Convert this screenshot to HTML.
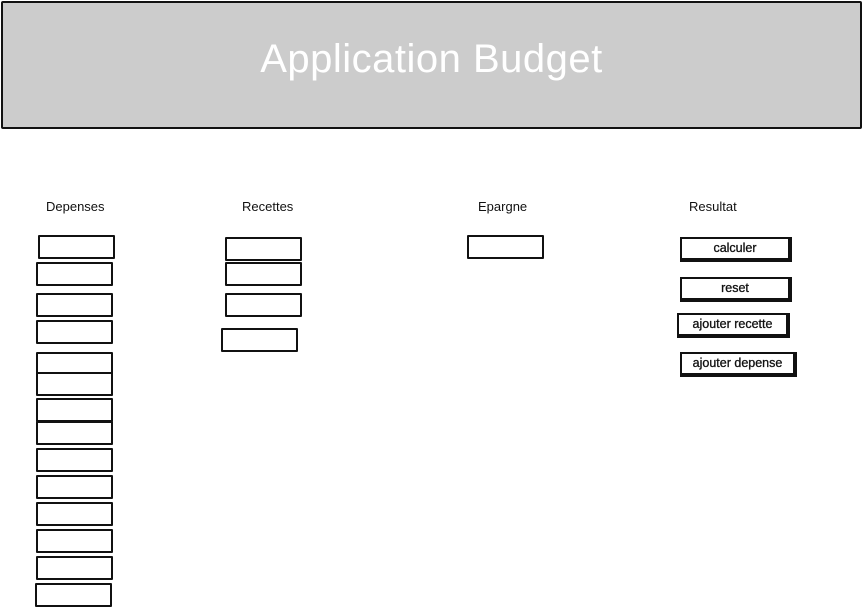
<!DOCTYPE html><html><head><style>
body{margin:0;width:863px;height:609px;background:#fff;position:relative;overflow:hidden;font-family:"Liberation Sans",sans-serif}
.h{position:absolute;left:1px;top:1px;width:857px;height:124px;background:#ccc;border:2px solid #111;border-radius:2px}
.t{position:absolute;left:0;width:863px;top:37px;text-align:center;color:#fff;font-size:40px;line-height:44px;letter-spacing:0.5px}
.l{position:absolute;font-size:13px;color:#111}
.b{position:absolute;width:73px;height:20px;border:2px solid #111;border-radius:1px;background:#fff}
.k{position:absolute;height:19px;border:2px solid #111;border-right-width:4px;border-bottom-width:4px;background:#fff;font-size:12.5px;text-align:center;line-height:19px;color:#111;-webkit-text-stroke:0.3px #111}
</style></head><body>
<div class="h"></div><div class="t">Application Budget</div>
<div class="l" style="left:46px;top:199px">Depenses</div>
<div class="l" style="left:242px;top:199px">Recettes</div>
<div class="l" style="left:478px;top:199px">Epargne</div>
<div class="l" style="left:689px;top:199px">Resultat</div>
<div class="b" style="left:38px;top:235px"></div>
<div class="b" style="left:36px;top:262px"></div>
<div class="b" style="left:36px;top:293px"></div>
<div class="b" style="left:36px;top:320px"></div>
<div class="b" style="left:36px;top:352px"></div>
<div class="b" style="left:36px;top:372px"></div>
<div class="b" style="left:36px;top:398px"></div>
<div class="b" style="left:36px;top:421px"></div>
<div class="b" style="left:36px;top:448px"></div>
<div class="b" style="left:36px;top:475px"></div>
<div class="b" style="left:36px;top:502px"></div>
<div class="b" style="left:36px;top:529px"></div>
<div class="b" style="left:36px;top:556px"></div>
<div class="b" style="left:35px;top:583px"></div>
<div class="b" style="left:225px;top:237px"></div>
<div class="b" style="left:225px;top:262px"></div>
<div class="b" style="left:225px;top:293px"></div>
<div class="b" style="left:221px;top:328px"></div>
<div class="b" style="left:467px;top:235px"></div>
<div class="k" style="left:680px;top:237px;width:106px">calculer</div>
<div class="k" style="left:680px;top:277px;width:106px">reset</div>
<div class="k" style="left:677px;top:313px;width:107px">ajouter recette</div>
<div class="k" style="left:680px;top:352px;width:111px">ajouter depense</div>
</body></html>
